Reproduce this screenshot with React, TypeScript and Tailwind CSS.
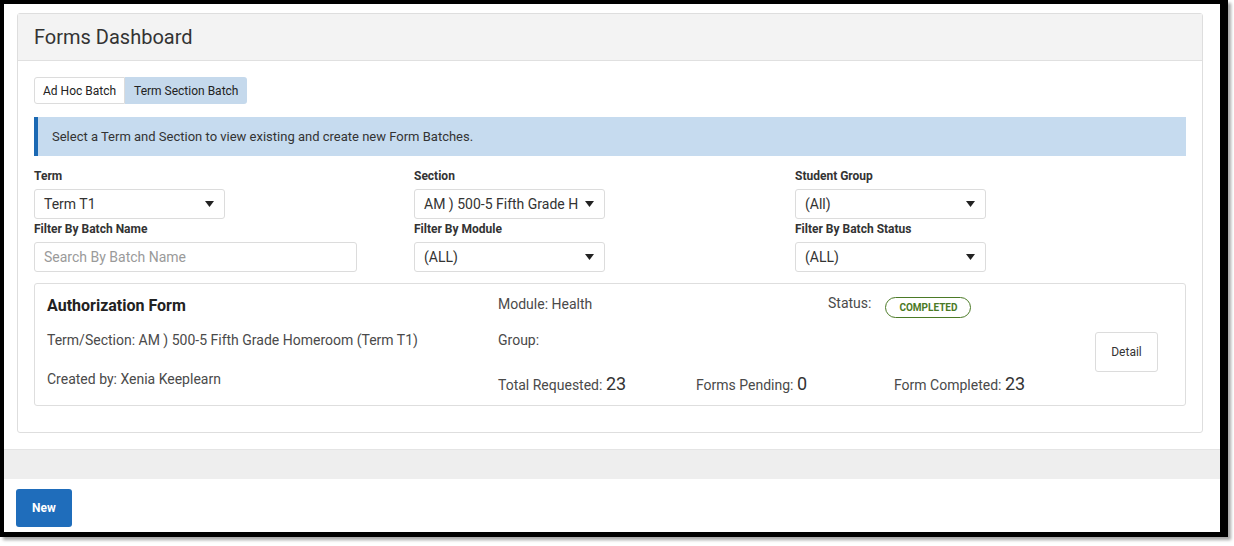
const Caret = () => (
  <svg width="9" height="6" viewBox="0 0 9 6" className="shrink-0">
    <path d="M0 0 L9 0 L4.5 6 Z" fill="#222" />
  </svg>
);

const Select = ({ value }: { value: string }) => (
  <div className="flex h-[30px] w-[191px] items-center justify-between rounded-[3px] border border-[#dcdcdc] bg-white pl-[9px] pr-[10px] text-[14px] text-[#333]">
    <span className="whitespace-nowrap">{value}</span>
    <Caret />
  </div>
);

const Field = ({ label, children }: { label: string; children: React.ReactNode }) => (
  <div className="flex flex-col">
    <div className="mb-[3px] h-[20px] text-[12px] leading-[20px] font-bold text-[#333]">{label}</div>
    {children}
  </div>
);

const App = () => {
  return (
    <div className="h-[546px] w-[1234px] bg-white font-['Roboto',sans-serif]">
      <div className="box-content h-[528px] w-[1216px] border-t-4 border-r-8 border-b-[5px] border-l-4 border-black bg-white shadow-[3px_3px_3px_rgba(0,0,0,0.35)]">
        <div className="flex h-full flex-col">
          <div className="ml-[13px] mt-[9px] w-[1186px] rounded-[3px] border border-[#dedede] bg-white">
            <div className="flex h-[47px] items-center border-b border-[#e0e0e0] bg-[#f3f3f3] px-[16px] text-[20px] text-[#333]">
              Forms Dashboard
            </div>
            <div className="px-[16px] pt-[16px] pb-[26px]">
              <div className="flex h-[27px] text-[12px] text-[#222]">
                <div className="flex items-center rounded-l-[3px] border border-[#dcdcdc] px-[8px]">Ad Hoc Batch</div>
                <div className="flex items-center rounded-r-[3px] bg-[#c5d9ec] px-[9px]">Term Section Batch</div>
              </div>

              <div className="mt-[13px] flex h-[39px] items-center border-l-4 border-[#1b69b3] bg-[#c6dbef] pl-[14px] text-[13px] text-[#333]">
                Select a Term and Section to view existing and create new Form Batches.
              </div>

              <div className="mt-[10px] grid grid-cols-[380px_381px_1fr]">
                <Field label="Term">
                  <Select value="Term T1" />
                </Field>
                <Field label="Section">
                  <Select value="AM ) 500-5 Fifth Grade H" />
                </Field>
                <Field label="Student Group">
                  <Select value="(All)" />
                </Field>
                <Field label="Filter By Batch Name">
                  <div className="flex h-[30px] w-[323px] items-center rounded-[3px] border border-[#dcdcdc] pl-[9px] text-[14px] text-[#9a9a9a]">
                    Search By Batch Name
                  </div>
                </Field>
                <Field label="Filter By Module">
                  <Select value="(ALL)" />
                </Field>
                <Field label="Filter By Batch Status">
                  <Select value="(ALL)" />
                </Field>
              </div>

              <div className="mt-[11px] flex h-[123px] rounded-[3px] border border-[#dedede] pl-[12px] text-[14px] text-[#4a4a4a]">
                <div className="flex w-[451px] flex-col pt-[12px]">
                  <div className="h-[20px] text-[16px] leading-[20px] font-bold text-[#222]">Authorization Form</div>
                  <div className="mt-[14px] h-[20px] leading-[20px]">Term/Section: AM ) 500-5 Fifth Grade Homeroom (Term T1)</div>
                  <div className="mt-[19px] h-[20px] leading-[20px]">Created by: Xenia Keeplearn</div>
                </div>
                <div className="flex w-[597px] flex-col pt-[10px]">
                  <div className="flex h-[20px] items-start leading-[20px]">
                    <div className="w-[330px]">Module: Health</div>
                    <div className="-mt-[1px]">Status:</div>
                    <div className="ml-[14px] mt-[3px] flex h-[21px] w-[86px] items-center justify-center rounded-full border border-[#4b7a26] text-[10px] font-bold text-[#4b7a26]">
                      COMPLETED
                    </div>
                  </div>
                  <div className="mt-[16px] h-[20px] leading-[20px]">Group:</div>
                  <div className="mt-[20px] flex items-baseline">
                    <div className="w-[198px]">
                      Total Requested: <span className="text-[18px] text-[#333]">23</span>
                    </div>
                    <div className="w-[198px]">
                      Forms Pending: <span className="text-[18px] text-[#333]">0</span>
                    </div>
                    <div>
                      Form Completed: <span className="text-[18px] text-[#333]">23</span>
                    </div>
                  </div>
                </div>
                <div className="pt-[48px]">
                  <div className="flex h-[40px] w-[63px] items-center justify-center rounded-[3px] border border-[#dcdcdc] text-[12px] text-[#333]">
                    Detail
                  </div>
                </div>
              </div>
            </div>
          </div>

          <div className="mt-[16px] h-[30px] border-t border-[#e4e4e4] bg-[#eeeeee]" />

          <div className="pl-[12px] pt-[10px]">
            <div className="flex h-[38px] w-[56px] items-center justify-center rounded-[3px] bg-[#1f6dbb] text-[12px] font-bold text-white">
              New
            </div>
          </div>
        </div>
      </div>
    </div>
  );
};

export default App;
